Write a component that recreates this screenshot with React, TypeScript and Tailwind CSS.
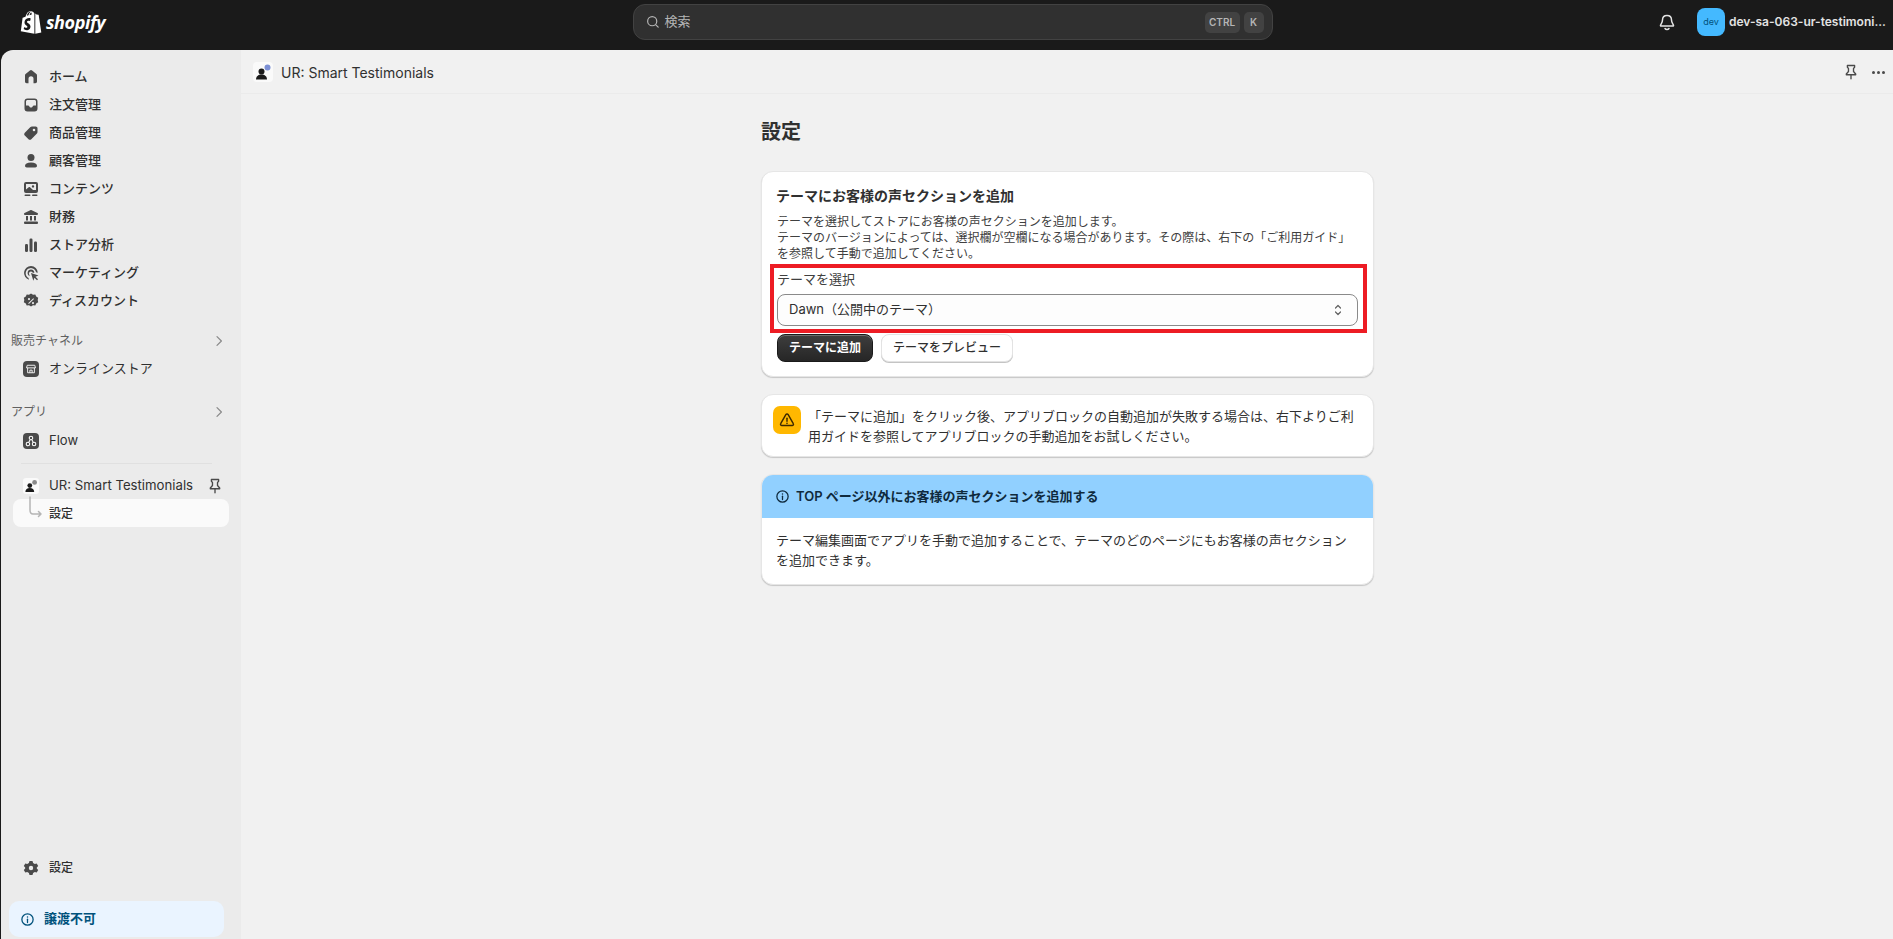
import type { ReactNode } from 'react'

const FONT = "font-['Inter','Noto_Sans_CJK_JP',sans-serif]"

function Icon({ children, className = 'w-5 h-5 text-[#4a4a4a]' }: { children: ReactNode; className?: string }) {
  return (
    <svg viewBox="0 0 20 20" fill="currentColor" className={className}>
      {children}
    </svg>
  )
}

const HomeIcon = () => (
  <Icon>
    <path d="M8.900 3.400a1.700 1.700 0 0 1 2.200 0l4.300 3.700c.4.300.6.800.6 1.300v6.100c0 1-.8 1.700-1.700 1.700h-1.800v-4.400a2.500 2.500 0 0 0-5 0v4.400H5.700c-1 0-1.700-.8-1.700-1.700V8.400c0-.5.2-1 .6-1.300l4.300-3.700Z" />
  </Icon>
)

const InboxIcon = () => (
  <Icon>
    <path
      fillRule="evenodd"
      d="M6.500 3.500h7a3 3 0 0 1 3 3v7a3 3 0 0 1-3 3h-7a3 3 0 0 1-3-3v-7a3 3 0 0 1 3-3ZM5 6.500c0-.8.7-1.500 1.500-1.500h7c.8 0 1.500.7 1.500 1.500v4h-2.200c-.4 0-.7.2-.9.5l-.4.8c-.2.4-.6.7-1 .7H9.500c-.4 0-.8-.3-1-.7l-.4-.8c-.2-.3-.5-.5-.9-.5H5v-4Z"
    />
  </Icon>
)

const TagIcon = () => (
  <Icon>
    <path
      fillRule="evenodd"
      d="M11 3.500h3.700c1 0 1.800.8 1.800 1.800V9c0 .7-.3 1.300-.8 1.800l-5.400 5.400c-.8.8-2 .8-2.800 0l-3.700-3.700c-.8-.8-.8-2 0-2.800l5.400-5.400c.5-.5 1.100-.8 1.800-.8Zm2 4.800a1.300 1.300 0 1 0 0-2.600 1.300 1.300 0 0 0 0 2.600Z"
    />
  </Icon>
)

const PersonIcon = () => (
  <Icon>
    <circle cx="10" cy="6.500" r="3.500" />
    <path d="M4 14.800c0-2 2-3.300 6-3.300s6 1.300 6 3.300c0 1-.8 1.700-1.700 1.700H5.700C4.800 16.500 4 15.800 4 14.800Z" />
  </Icon>
)

const ContentIcon = () => (
  <Icon>
    <path
      fillRule="evenodd"
      d="M5 3h10a2 2 0 0 1 2 2v7a2 2 0 0 1-2 2H5a2 2 0 0 1-2-2V5a2 2 0 0 1 2-2Zm0 2v5.500l2.700-2.200c.4-.3.900-.3 1.300 0l3 2.700H15V5H5Zm7 1.200a1.200 1.200 0 1 0 0 2.400 1.200 1.200 0 0 0 0-2.400Z"
    />
    <rect x="3.500" y="15.500" width="6" height="1.500" rx=".75" />
    <rect x="11" y="15.500" width="5.500" height="1.500" rx=".75" />
  </Icon>
)

const BankIcon = () => (
  <Icon>
    <path d="M9.300 3.200c.4-.2 1-.2 1.400 0l5.800 2.900c.9.500.6 1.900-.5 1.900H4c-1.100 0-1.400-1.400-.5-1.900l5.800-2.900Z" />
    <path d="M5 9h2v4.500H5V9Zm4 0h2v4.500H9V9Zm4 0h2v4.500h-2V9Z" />
    <rect x="3" y="14.500" width="14" height="2.500" rx="1" />
  </Icon>
)

const ChartIcon = () => (
  <Icon>
    <rect x="4" y="9" width="3" height="8" rx="1.200" />
    <rect x="8.500" y="3.500" width="3" height="13.500" rx="1.200" />
    <rect x="13" y="6.500" width="3" height="10.500" rx="1.200" />
  </Icon>
)

const TargetIcon = () => (
  <Icon>
    <path
      fillRule="evenodd"
      d="M10 3a7 7 0 0 0-2 13.700l-.5-1.800A5.200 5.200 0 1 1 15 9.300l1.800.5A7 7 0 0 0 10 3Zm0 3.500a3.500 3.500 0 0 0-1.300 6.700l-.5-1.800a1.800 1.800 0 1 1 3.300-1.900l1.800.5A3.500 3.500 0 0 0 10 6.500Z"
    />
    <path d="M10 10l7.500 2.500-3 1.200 2.500 2.500-1 1-2.500-2.500-1.200 3L10 10Z" />
  </Icon>
)

const DiscountIcon = () => (
  <Icon>
    <path
      fillRule="evenodd"
      d="M10 2.500l2 1.200 2.300-.2.900 2.100 2 1.200-.5 2.200.5 2.200-2 1.200-.9 2.100-2.300-.2-2 1.200-2-1.200-2.300.2-.9-2.100-2-1.200.5-2.200-.5-2.200 2-1.200.9-2.100 2.300.2 2-1.200Zm2.300 4.700L7.200 12.300l.7.700L13 7.900l-.7-.7ZM8 7a1.100 1.100 0 1 0 0 2.200A1.100 1.100 0 0 0 8 7Zm4 4a1.100 1.100 0 1 0 0 2.200 1.100 1.100 0 0 0 0-2.200Z"
    />
  </Icon>
)

const GearIcon = () => (
  <Icon>
    <path
      fillRule="evenodd"
      d="M8.500 3h3l.6 1.900 1.700 1 1.900-.5 1.500 2.600-1.400 1.400v1.200l1.400 1.400-1.500 2.600-1.900-.5-1.700 1-.6 1.900h-3l-.6-1.900-1.700-1-1.900.5-1.500-2.600 1.400-1.400V9.400L2.800 8l1.500-2.600 1.900.5 1.700-1 .6-1.900ZM10 7.800a2.200 2.200 0 1 0 0 4.400 2.200 2.200 0 0 0 0-4.400Z"
    />
  </Icon>
)

const PinIcon = ({ className }: { className: string }) => (
  <svg viewBox="0 0 20 20" fill="none" stroke="currentColor" strokeWidth="1.500" strokeLinejoin="round" className={className}>
    <path d="M6 2.800h8v2l-1.200 1.200v3.500l2.400 2.700v.8H4.800v-.8l2.400-2.700V6L6 4.800v-2Z" />
    <path d="M10 13v4.500" strokeLinecap="round" />
  </svg>
)

const InfoIcon = ({ className }: { className: string }) => (
  <svg viewBox="0 0 20 20" fill="none" stroke="currentColor" strokeWidth="1.700" className={className}>
    <circle cx="10" cy="10" r="7.500" />
    <path d="M10 9.500v4.500" strokeLinecap="round" />
    <circle cx="10" cy="6.500" r="1" fill="currentColor" stroke="none" />
  </svg>
)

const Chevron = () => (
  <svg viewBox="0 0 20 20" fill="none" stroke="#8a8a8a" strokeWidth="1.500" strokeLinecap="round" strokeLinejoin="round" className="h-4 w-4">
    <path d="M7.500 4.500 13 10l-5.500 5.500" />
  </svg>
)

const ShopifyBag = () => (
  <svg viewBox="0 0 22 25" className="h-[25px] w-[22px]">
    <path fill="#fff" d="M15.500 4.600 14.400 4.900C14 3.700 13.300 2.600 12 2.600h-.1C11.500 2.100 11 1.900 10.600 1.900 7.500 1.900 6 5.800 5.500 7.800l-2.200.7c-.7.200-.7.200-.8.900L.8 22.300l13.600 2.500V4.700Zm-3.800 1-2.200.7c.4-1.600 1.200-2.400 1.900-2.700.2.500.3 1.200.3 2Zm-1.300-3c.1 0 .3 0 .4.100-.9.400-1.900 1.500-2.300 3.600l-1.700.5c.5-1.600 1.600-4.200 3.600-4.200Z" />
    <path fill="#fff" d="M15.300 24.800 21.300 23.500 18.700 6c0-.2-.2-.3-.3-.3l-1.900-.1-1.200-1.200v20.400Z" />
    <path fill="#1a1a1a" d="M10.800 9.600 10.100 12s-.8-.4-1.700-.3c-1.400.1-1.400 1-1.400 1.200.1 1.200 3.300 1.500 3.500 4.400.1 2.300-1.200 3.800-3.200 3.900-2.300.1-3.600-1.200-3.600-1.200l.5-2.100s1.300 1 2.300.9c.7 0 .9-.6.900-1 -.1-1.600-2.700-1.500-2.900-4.100-.1-2.200 1.300-4.400 4.500-4.600 1.200-.1 1.500.5 1.500.5Z" />
  </svg>
)

const AppLogo = ({ dot }: { dot: string }) => (
  <svg viewBox="0 0 20 20" className="h-full w-full">
    <rect width="20" height="20" rx="4" fill="#fafafa" />
    <circle cx="8.500" cy="9.500" r="3" fill="#1a1a1a" />
    <path d="M3 17.500c0-3 2.200-5 5.500-5s5.500 2 5.500 5H3Z" fill="#1a1a1a" />
    <circle cx="14.500" cy="5.500" r="3" fill={dot} />
  </svg>
)

const mainNav = [
  { label: 'ホーム', icon: <HomeIcon /> },
  { label: '注文管理', icon: <InboxIcon /> },
  { label: '商品管理', icon: <TagIcon /> },
  { label: '顧客管理', icon: <PersonIcon /> },
  { label: 'コンテンツ', icon: <ContentIcon /> },
  { label: '財務', icon: <BankIcon /> },
  { label: 'ストア分析', icon: <ChartIcon /> },
  { label: 'マーケティング', icon: <TargetIcon /> },
  { label: 'ディスカウント', icon: <DiscountIcon /> },
]

function NavRow({ icon, children, className = '' }: { icon: ReactNode; children: ReactNode; className?: string }) {
  return (
    <div className={`flex h-7 items-center pl-[20px] text-[13px] text-[#303030] ${className}`}>
      <span className="mr-[8px] flex h-5 w-5 items-center justify-center">{icon}</span>
      {children}
    </div>
  )
}

function SectionHead({ label }: { label: string }) {
  return (
    <div className="flex h-7 items-center justify-between pl-[10px] pr-[14px] text-[12px] text-[#616161]">
      {label}
      <Chevron />
    </div>
  )
}

function Sidebar() {
  return (
    <aside className="flex w-[240px] shrink-0 flex-col rounded-tl-xl bg-[#ebebeb] pt-[13px]">
      {mainNav.map((item) => (
        <NavRow key={item.label} icon={item.icon} className="font-medium">
          {item.label}
        </NavRow>
      ))}
      <div className="mt-3">
        <SectionHead label="販売チャネル" />
        <NavRow
          icon={
            <span className="flex h-4 w-4 items-center justify-center rounded-[4px] bg-[#4a4a4a]">
              <svg viewBox="0 0 16 16" fill="none" stroke="#fff" strokeWidth="1.200" className="h-3 w-3">
                <path d="M3 3h10l1 3.500H2L3 3ZM3.500 6.500V13h9V6.500M6.500 13V9.500h3V13" />
              </svg>
            </span>
          }
        >
          オンラインストア
        </NavRow>
      </div>
      <div className="mt-[15px]">
        <SectionHead label="アプリ" />
        <div className="mt-px">
          <NavRow
            icon={
              <span className="flex h-4 w-4 items-center justify-center rounded-[4px] bg-[#4a4a4a]">
                <svg viewBox="0 0 16 16" fill="none" stroke="#fff" strokeWidth="1.200" className="h-3.5 w-3.5">
                  <circle cx="8" cy="4.500" r="2" />
                  <circle cx="4.500" cy="11.500" r="2" />
                  <circle cx="11.500" cy="11.500" r="2" />
                  <path d="M7 6.500 5.500 9.500M9 6.500l1.500 3" />
                </svg>
              </span>
            }
          >
            Flow
          </NavRow>
        </div>
      </div>
      <div className="ml-[20px] mr-[29px] mt-2 h-px bg-[#e0e0e0]" />
      <div className="mt-2">
        <NavRow
          icon={
            <span className="h-4 w-4">
              <AppLogo dot="#8a8a8a" />
            </span>
          }
        >
          <span className="flex-1 text-[13.200px]">UR: Smart Testimonials</span>
          <PinIcon className="mr-[17px] h-[18px] w-[18px] text-[#4a4a4a]" />
        </NavRow>
        <div className="relative -mt-px ml-[12px] mr-[12px] flex h-7 items-center rounded-lg bg-[#fafafa] pl-9 pt-px text-[12px] font-medium text-[#303030]">
          <svg viewBox="0 0 16 24" fill="none" stroke="#b5b5b5" strokeWidth="1.500" strokeLinecap="round" strokeLinejoin="round" className="absolute left-[16px] top-[-3px] h-6 w-4">
            <path d="M1 1v13c0 2.500 1 4 3 4h8M9.500 15.500 12 18l-2.500 2.500" />
          </svg>
          設定
        </div>
      </div>
      <div className="mt-auto">
        <NavRow icon={<GearIcon />} className="mb-[19px] font-medium">
          <span className="text-[12px]">設定</span>
        </NavRow>
        <div className="mb-[2px] ml-[8px] mr-[17px] flex h-9 items-center rounded-[10px] bg-[#eaf4ff] pl-[11px] text-[13px] font-bold text-[#00527c]">
          <InfoIcon className="mr-[9px] h-[15px] w-[15px]" />
          譲渡不可
        </div>
      </div>
    </aside>
  )
}

function TopBar() {
  return (
    <header className="relative flex h-[50px] shrink-0 items-center justify-center bg-[#1a1a1a]">
      <div className="absolute left-[20px] top-[9px] flex items-center gap-[4px]">
        <ShopifyBag />
        <span className="font-['Open_Sans',sans-serif] text-[18px] font-bold italic leading-6 tracking-[-0.4px] text-white">shopify</span>
      </div>
      <div className="mb-[6px] ml-[12px] flex h-9 w-[640px] items-center rounded-xl border border-[#424242] bg-[#303030] pl-[11px] pr-[8px] text-[13px] text-[#b5b5b5]">
        <svg viewBox="0 0 20 20" fill="none" stroke="currentColor" strokeWidth="1.500" strokeLinecap="round" className="mr-[4px] h-4 w-4">
          <circle cx="9" cy="9" r="5.700" />
          <path d="m13.500 13.500 3 3" />
        </svg>
        <span className="flex-1">検索</span>
        <span className="flex h-[21px] w-[35px] items-center justify-center rounded-[5px] bg-[#424242] text-[10px] font-semibold">CTRL</span>
        <span className="ml-[4px] flex h-[21px] w-5 items-center justify-center rounded-[5px] bg-[#424242] text-[10px] font-semibold">K</span>
      </div>
      <div className="absolute left-[1657px] top-[12px] h-5 w-5 text-[#e3e3e3]">
        <svg viewBox="0 0 20 20" fill="none" stroke="currentColor" strokeWidth="1.500" strokeLinejoin="round" strokeLinecap="round">
          <path d="M10 3.500c-2.800 0-4.500 2-4.500 4.500 0 2.700-1.500 4-2 5.200-.1.400.1.800.6.800h11.800c.5 0 .7-.4.600-.8-.5-1.200-2-2.500-2-5.200 0-2.500-1.700-4.500-4.500-4.500Z" />
          <path d="M8 16.500c.5.700 1.200 1 2 1s1.500-.3 2-1" />
        </svg>
      </div>
      <div className="absolute left-[1697px] top-[8px] flex items-center gap-[4px]">
        <span className="flex h-7 w-7 items-center justify-center rounded-lg bg-[#44b9ff] text-[9px] text-[#00527c]">dev</span>
        <span className="whitespace-nowrap text-[12px] font-semibold text-[#e3e3e3]">dev-sa-063-ur-testimoni...</span>
      </div>
    </header>
  )
}

function Card({ children, className = '' }: { children: ReactNode; className?: string }) {
  return (
    <section className={`overflow-hidden rounded-xl border border-[#e6e6e6] bg-white shadow-[0_1px_1px_rgba(0,0,0,0.18)] ${className}`}>
      {children}
    </section>
  )
}

function SettingsColumn() {
  return (
    <div className="ml-[520px] w-[613px] pt-[26px] text-[#303030]">
      <h1 className="text-[20px] font-bold leading-6">設定</h1>
      <Card className="mt-[27px] px-[15px] pb-[14px] pt-[14px]">
        <h2 className="-ml-px text-[14px] font-semibold leading-5">テーマにお客様の声セクションを追加</h2>
        <p className="mt-2 text-[12px] leading-4 text-[#404040]">
          テーマを選択してストアにお客様の声セクションを追加します。
          <br />
          テーマのバージョンによっては、選択欄が空欄になる場合があります。その際は、右下の「ご利用ガイド」
          <br />
          を参照して手動で追加してください。
        </p>
        <div className="relative mt-[7px]">
          <label className="block text-[13px] leading-5 text-[#404040]">テーマを選択</label>
          <div className="mt-[5px] flex h-8 items-center justify-between rounded-lg border border-[#8a8a8a] bg-[#fdfdfd] px-[11px] text-[13px]">
            Dawn（公開中のテーマ）
            <svg viewBox="0 0 16 16" fill="none" stroke="#616161" strokeWidth="1.200" strokeLinecap="round" strokeLinejoin="round" className="h-4 w-4">
              <path d="m5.500 6 2.500-2.500L10.500 6M5.500 10l2.500 2.500 2.500-2.500" />
            </svg>
          </div>
          <div className="pointer-events-none absolute -bottom-[7px] -left-[7px] -right-[9px] -top-[5px] border-4 border-[#ed1c24]" />
        </div>
        <div className="mt-2 flex gap-2">
          <button className="h-7 w-24 rounded-lg border border-[#1a1a1a] bg-gradient-to-b from-[#3e3e3e] to-[#262626] text-[12px] font-semibold text-white shadow-[inset_0_1px_0_rgba(255,255,255,0.25)]">
            テーマに追加
          </button>
          <button className="h-7 w-[132px] rounded-lg border border-[#e3e3e3] bg-white text-[12px] font-medium text-[#303030] shadow-[0_1px_0_#c4c4c4]">
            テーマをプレビュー
          </button>
        </div>
      </Card>
      <Card className="mt-[17px] flex h-[63px] gap-[7px] pl-[11px] pr-[15px] pt-[11px]">
        <span className="flex h-7 w-7 shrink-0 items-center justify-center rounded-[7px] bg-[#ffb800]">
          <svg viewBox="0 0 20 20" fill="none" stroke="#3d2a00" strokeWidth="1.600" strokeLinejoin="round" className="h-[18px] w-[18px]">
            <path d="M8.700 4 3 14c-.6 1 .1 2.200 1.300 2.200h11.400c1.200 0 1.900-1.200 1.300-2.200L11.300 4c-.6-1-2-1-2.600 0Z" />
            <path d="M10 8v3.500" strokeLinecap="round" />
            <circle cx="10" cy="13.700" r=".9" fill="#3d2a00" stroke="none" />
          </svg>
        </span>
        <p className="text-[13px] leading-5">
          「テーマに追加」をクリック後、アプリブロックの自動追加が失敗する場合は、右下よりご利用ガイドを参照してアプリブロックの手動追加をお試しください。
        </p>
      </Card>
      <Card className="mt-[17px] h-[111px]">
        <div className="flex h-[43px] items-center gap-[6px] bg-[#91d0ff] pl-[13px] text-[13px] font-semibold text-[#0f2a3d]">
          <InfoIcon className="h-[15px] w-[15px]" />
          TOP ページ以外にお客様の声セクションを追加する
        </div>
        <p className="px-[14px] pt-[12px] text-[13px] leading-5">
          テーマ編集画面でアプリを手動で追加することで、テーマのどのページにもお客様の声セクションを追加できます。
        </p>
      </Card>
    </div>
  )
}

export default function App() {
  return (
    <div className={`flex h-[939px] w-[1893px] flex-col overflow-hidden bg-[#1a1a1a] ${FONT}`}>
      <TopBar />
      <div className="flex min-h-0 flex-1 pl-px">
        <Sidebar />
        <main className="flex-1 bg-[#f1f1f1]">
          <div className="flex h-[44px] items-center border-b border-[#ebebeb] pl-3 pr-[5px] pt-px text-[14px] text-[#303030]">
            <span className="mr-[8px] h-5 w-5">
              <AppLogo dot="#7b8fd4" />
            </span>
            <span className="flex-1">UR: Smart Testimonials</span>
            <PinIcon className="mr-[8px] h-[18px] w-[18px] text-[#4a4a4a]" />
            <span className="flex h-5 w-5 items-center justify-center gap-[2px]">
              <i className="h-[3px] w-[3px] rounded-full bg-[#4a4a4a]" />
              <i className="h-[3px] w-[3px] rounded-full bg-[#4a4a4a]" />
              <i className="h-[3px] w-[3px] rounded-full bg-[#4a4a4a]" />
            </span>
          </div>
          <SettingsColumn />
        </main>
      </div>
    </div>
  )
}
